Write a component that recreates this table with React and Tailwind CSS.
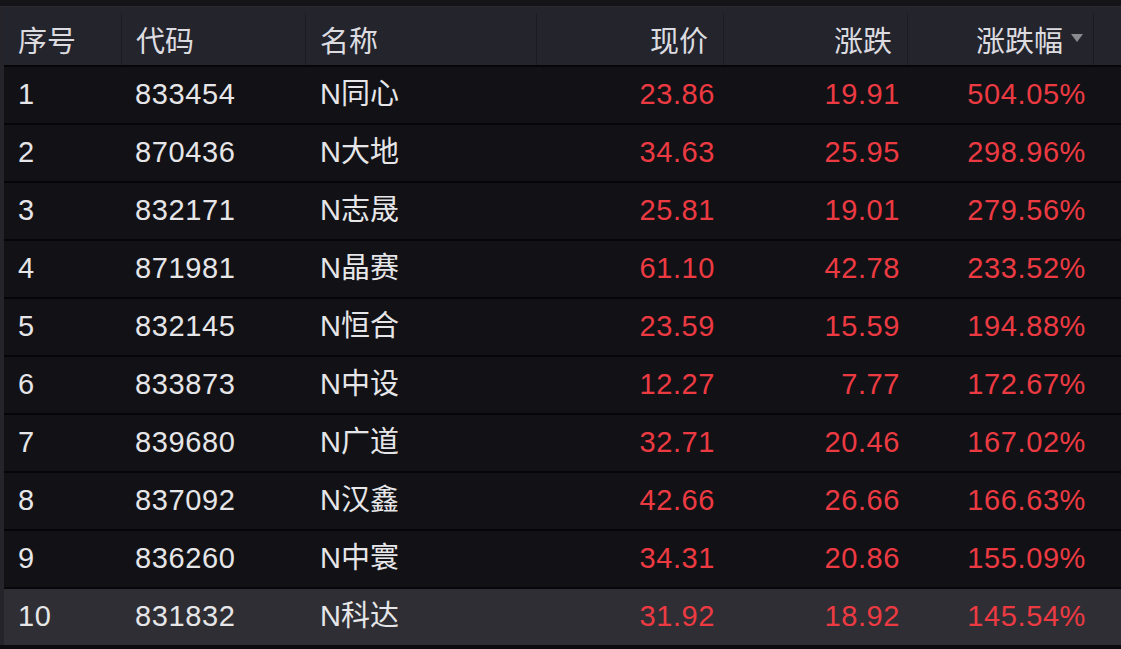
// App.jsx
const rows = [
  ["1", "833454", "N同心", "23.86", "19.91", "504.05%"],
  ["2", "870436", "N大地", "34.63", "25.95", "298.96%"],
  ["3", "832171", "N志晟", "25.81", "19.01", "279.56%"],
  ["4", "871981", "N晶赛", "61.10", "42.78", "233.52%"],
  ["5", "832145", "N恒合", "23.59", "15.59", "194.88%"],
  ["6", "833873", "N中设", "12.27", "7.77", "172.67%"],
  ["7", "839680", "N广道", "32.71", "20.46", "167.02%"],
  ["8", "837092", "N汉鑫", "42.66", "26.66", "166.63%"],
  ["9", "836260", "N中寰", "34.31", "20.86", "155.09%"],
  ["10", "831832", "N科达", "31.92", "18.92", "145.54%"],
];

const cols = "grid grid-cols-[118px_184px_231px_187px_184px_186px_1fr]";

function HeadCell({ children, right }) {
  return (
    <div
      className={`flex items-center h-full border-r border-[#1b1b21] ${
        right ? "justify-end pr-[15px]" : "pl-[14px]"
      }`}
    >
      <span className="pt-[8px]">{children}</span>
    </div>
  );
}

export default function App() {
  return (
    <div
      className="w-[1121px] h-[649px] overflow-hidden bg-[#0b0b0f] text-[#e6e6e8] text-[29px]"
      style={{ fontFamily: '"Liberation Sans", Arial, "Noto Sans CJK SC", sans-serif' }}
    >
      <div className="h-[7px] bg-[#141419] border-b border-[#2a2a31]" />
      <div className="flex">
        <div className="w-[4px] bg-[#24242a] shrink-0" />
        <div className="flex-1">
          {/* Header */}
          <div className={`${cols} h-[58px] bg-[#24242c] py-[6px] text-[#dcdce0]`}>
            <HeadCell>序号</HeadCell>
            <HeadCell>代码</HeadCell>
            <HeadCell>名称</HeadCell>
            <HeadCell right>现价</HeadCell>
            <HeadCell right>涨跌</HeadCell>
            <div className="flex items-center justify-end h-full pr-[10px] border-r border-[#1b1b21]">
              <span className="pt-[8px]">涨跌幅</span>
              <span className="ml-[8px] mt-[-2px] w-0 h-0 border-l-[6px] border-r-[6px] border-t-[8px] border-l-transparent border-r-transparent border-t-[#8a8a90]" />
            </div>
            <div />
          </div>

          {/* Rows */}
          {rows.map((r, i) => (
            <div
              key={r[0]}
              className={`${cols} h-[58px] items-center border-t-2 tracking-[0.6px] ${
                i === rows.length - 1
                  ? "bg-[#2e2e34] border-[#08080b]"
                  : "bg-[#111116] border-[#060609]"
              }`}
            >
              <div className="pl-[14px]">{r[0]}</div>
              <div className="pl-[13px]">{r[1]}</div>
              <div className="pl-[14px] tracking-normal">{r[2]}</div>
              <div className="text-right pr-[9px] text-[#ec3a42]">{r[3]}</div>
              <div className="text-right pr-[8px] text-[#ec3a42]">{r[4]}</div>
              <div className="text-right pr-[8px] text-[#ec3a42]">{r[5]}</div>
              <div />
            </div>
          ))}
        </div>
      </div>
    </div>
  );
}
